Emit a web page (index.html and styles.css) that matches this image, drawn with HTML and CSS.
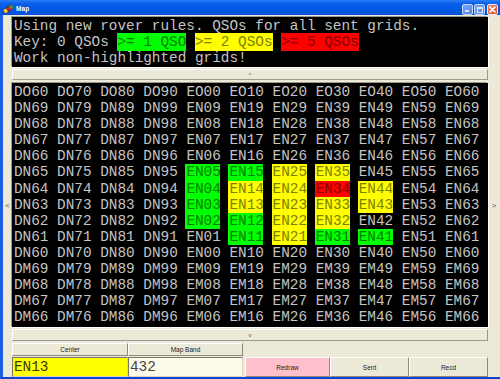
FILE: index.html
```html
<!DOCTYPE html>
<html>
<head>
<meta charset="utf-8">
<title>Map</title>
<link rel="stylesheet" href="styles.css">
</head>
<body>
<div class="window">
  <div class="titlebar">
    <svg class="appicon" width="11" height="11" viewBox="0 0 11 11">
      <rect x="0.5" y="4" width="10" height="4" rx="1" transform="rotate(-35 5.5 6)" fill="#c8281e" stroke="#5a1008" stroke-width="0.6"/>
      <rect x="0.5" y="4" width="3" height="4" transform="rotate(-35 5.5 6)" fill="#f2d13a"/>
      <rect x="7.5" y="4" width="3" height="4" transform="rotate(-35 5.5 6)" fill="#3aa23a"/>
    </svg>
    <span class="title">Map</span>
    <div class="tbtns">
      <div class="tbtn tmin"><span class="minbar"></span></div>
      <div class="tbtn tmax"><span class="maxbox"></span></div>
      <div class="tbtn tclose">
        <svg width="9" height="9" viewBox="0 0 9 9"><path d="M2 2 L7 7 M7 2 L2 7" stroke="#fff" stroke-width="1.6" stroke-linecap="round"/></svg>
      </div>
    </div>
  </div>
  <div class="body">
    <div class="side side-left">&lt;</div>
    <div class="main">
      <div class="panel msg">
        <div class="line">Using new rover rules. QSOs for all sent grids.</div>
        <div class="line">Key: 0 QSOs <span class="k g">&gt;= 1 QSO</span> <span class="k y">&gt;= 2 QSOs</span> <span class="k r">&gt;= 5 QSOs</span></div>
        <div class="line">Work non-highlighted grids!</div>
      </div>
      <div class="bar bar-up">^</div>
      <div class="panel gridpanel">
        <div class="grid">
          <span class="c">DO60</span><span class="c">DO70</span><span class="c">DO80</span><span class="c">DO90</span><span class="c">EO00</span><span class="c">EO10</span><span class="c">EO20</span><span class="c">EO30</span><span class="c">EO40</span><span class="c">EO50</span><span class="c">EO60</span>
          <span class="c">DN69</span><span class="c">DN79</span><span class="c">DN89</span><span class="c">DN99</span><span class="c">EN09</span><span class="c">EN19</span><span class="c">EN29</span><span class="c">EN39</span><span class="c">EN49</span><span class="c">EN59</span><span class="c">EN69</span>
          <span class="c">DN68</span><span class="c">DN78</span><span class="c">DN88</span><span class="c">DN98</span><span class="c">EN08</span><span class="c">EN18</span><span class="c">EN28</span><span class="c">EN38</span><span class="c">EN48</span><span class="c">EN58</span><span class="c">EN68</span>
          <span class="c">DN67</span><span class="c">DN77</span><span class="c">DN87</span><span class="c">DN97</span><span class="c">EN07</span><span class="c">EN17</span><span class="c">EN27</span><span class="c">EN37</span><span class="c">EN47</span><span class="c">EN57</span><span class="c">EN67</span>
          <span class="c">DN66</span><span class="c">DN76</span><span class="c">DN86</span><span class="c">DN96</span><span class="c">EN06</span><span class="c">EN16</span><span class="c">EN26</span><span class="c">EN36</span><span class="c">EN46</span><span class="c">EN56</span><span class="c">EN66</span>
          <span class="c">DN65</span><span class="c">DN75</span><span class="c">DN85</span><span class="c">DN95</span><span class="c g">EN05</span><span class="c g">EN15</span><span class="c y">EN25</span><span class="c y">EN35</span><span class="c">EN45</span><span class="c">EN55</span><span class="c">EN65</span>
          <span class="c">DN64</span><span class="c">DN74</span><span class="c">DN84</span><span class="c">DN94</span><span class="c g">EN04</span><span class="c y">EN14</span><span class="c y">EN24</span><span class="c r">EN34</span><span class="c y">EN44</span><span class="c">EN54</span><span class="c">EN64</span>
          <span class="c">DN63</span><span class="c">DN73</span><span class="c">DN83</span><span class="c">DN93</span><span class="c g">EN03</span><span class="c y">EN13</span><span class="c y">EN23</span><span class="c y">EN33</span><span class="c y">EN43</span><span class="c">EN53</span><span class="c">EN63</span>
          <span class="c">DN62</span><span class="c">DN72</span><span class="c">DN82</span><span class="c">DN92</span><span class="c g">EN02</span><span class="c g">EN12</span><span class="c y">EN22</span><span class="c y">EN32</span><span class="c">EN42</span><span class="c">EN52</span><span class="c">EN62</span>
          <span class="c">DN61</span><span class="c">DN71</span><span class="c">DN81</span><span class="c">DN91</span><span class="c">EN01</span><span class="c g">EN11</span><span class="c y">EN21</span><span class="c g">EN31</span><span class="c g">EN41</span><span class="c">EN51</span><span class="c">EN61</span>
          <span class="c">DN60</span><span class="c">DN70</span><span class="c">DN80</span><span class="c">DN90</span><span class="c">EN00</span><span class="c">EN10</span><span class="c">EN20</span><span class="c">EN30</span><span class="c">EN40</span><span class="c">EN50</span><span class="c">EN60</span>
          <span class="c">DM69</span><span class="c">DM79</span><span class="c">DM89</span><span class="c">DM99</span><span class="c">EM09</span><span class="c">EM19</span><span class="c">EM29</span><span class="c">EM39</span><span class="c">EM49</span><span class="c">EM59</span><span class="c">EM69</span>
          <span class="c">DM68</span><span class="c">DM78</span><span class="c">DM88</span><span class="c">DM98</span><span class="c">EM08</span><span class="c">EM18</span><span class="c">EM28</span><span class="c">EM38</span><span class="c">EM48</span><span class="c">EM58</span><span class="c">EM68</span>
          <span class="c">DM67</span><span class="c">DM77</span><span class="c">DM87</span><span class="c">DM97</span><span class="c">EM07</span><span class="c">EM17</span><span class="c">EM27</span><span class="c">EM37</span><span class="c">EM47</span><span class="c">EM57</span><span class="c">EM67</span>
          <span class="c">DM66</span><span class="c">DM76</span><span class="c">DM86</span><span class="c">DM96</span><span class="c">EM06</span><span class="c">EM16</span><span class="c">EM26</span><span class="c">EM36</span><span class="c">EM46</span><span class="c">EM56</span><span class="c">EM66</span>
        </div>
      </div>
      <div class="bar bar-down">v</div>
      <div class="labels">
        <div class="btn lbl w1">Center</div>
        <div class="btn lbl w2">Map Band</div>
      </div>
      <div class="controls">
        <div class="field f-center">EN13</div>
        <div class="field f-band">432</div>
        <div class="btn big redraw">Redraw</div>
        <div class="btn big sent">Sent</div>
        <div class="btn big recd">Recd</div>
      </div>
    </div>
    <div class="side side-right">&gt;</div>
  </div>
</div>
</body>
</html>
```
FILE: styles.css
```css
* { box-sizing: border-box; }
html, body { margin: 0; padding: 0; }
body {
  width: 500px;
  height: 379px;
  overflow: hidden;
  background: #ECE9D8;
  font-family: "Liberation Sans", Arial, sans-serif;
}
.window {
  width: 500px;
  height: 379px;
  display: flex;
  flex-direction: column;
  background: #ECE9D8;
}
.titlebar {
  height: 15px;
  flex: none;
  display: flex;
  align-items: center;
  background: linear-gradient(#2a7cf5 0%, #0a5fea 25%, #0058e6 60%, #0452d8 100%);
  padding-left: 3px;
  padding-right: 2px;
}
.appicon { flex: none; margin-top: 1px; }
.title {
  color: #fff;
  font-weight: bold;
  font-size: 6.6px;
  margin-left: 2px;
  margin-top: 2px;
  text-shadow: 1px 0 0 #0a3a9a;
}
.tbtns {
  margin-left: auto;
  display: flex;
  gap: 1px;
  margin-top: 4px;
}
.tbtn {
  width: 11px;
  height: 11px;
  border: 1px solid #e8eefc;
  border-radius: 2px;
  position: relative;
  display: flex;
  align-items: center;
  justify-content: center;
}
.tmin, .tmax {
  background: linear-gradient(135deg, #8cb4f8, #5a8ff0);
  opacity: 0.85;
}
.tclose {
  background: linear-gradient(135deg, #ee8a66, #d94a22);
  margin-left: 1px;
}
.minbar {
  position: absolute;
  left: 2px;
  bottom: 2px;
  width: 4px;
  height: 2px;
  background: #fff;
}
.maxbox {
  width: 6px;
  height: 6px;
  border: 1px solid #fff;
  border-top-width: 2px;
}
.body {
  flex: 1;
  display: flex;
  border-left: 3px solid #1d5ee6;
  border-bottom: 2px solid #0b46d0;
}
.side {
  display: flex;
  align-items: center;
  justify-content: center;
  font-size: 8px;
  color: #555;
  padding-top: 18px;
}
.side-left { width: 9px; }
.side-right { width: 12px; }
.main {
  width: 476px;
  display: flex;
  flex-direction: column;
  padding-top: 2px;
}
.panel {
  background: #000;
  box-shadow: -1px -1px 0 #9d9a8c, 1px 1px 0 #ffffff;
  font-family: "Liberation Mono", "Courier New", monospace;
  font-size: 14.37px;
  color: #c4c4c4;
}
.msg {
  height: 50px;
  padding: 1px 0 0 2px;
}
.line {
  height: 16px;
  line-height: 16px;
  white-space: pre;
}
.k { padding: 1px 0; }
.g { background: #00ff00; color: #008000; }
.y { background: #ffff00; color: #808000; }
.r { background: #ff0000; color: #800000; }
.bar {
  background: #ECE9D8;
  border: 1px solid;
  border-color: #ffffff #9d9a8c #9d9a8c #ffffff;
  display: flex;
  align-items: center;
  justify-content: center;
  font-size: 6px;
  color: #555;
}
.bar-up { height: 11px; margin-top: 2px; }
.gridpanel {
  height: 244px;
  margin-top: 3px;
  padding: 1px 0 0 2px;
}
.grid {
  display: grid;
  grid-template-columns: repeat(11, 43.1px);
  grid-auto-rows: 16.1px;
  line-height: 16.1px;
}
.c {
  justify-self: start;
  width: 35px;
  margin-left: -1px;
  padding-left: 1px;
  white-space: nowrap;
}
.bar-down { height: 12px; margin-top: 2px; }
.labels {
  display: flex;
  height: 13px;
  margin-top: 2px;
}
.btn {
  background: #ECE9D8;
  border: 1px solid;
  border-color: #ffffff #8e8b7e #8e8b7e #ffffff;
  display: flex;
  align-items: center;
  justify-content: center;
  font-family: "Liberation Sans", Arial, sans-serif;
  font-size: 6.5px;
  color: #222;
}
.lbl.w1 { width: 116px; }
.lbl.w2 { width: 115px; }
.controls {
  display: flex;
  height: 20px;
  margin-top: 1px;
}
.field {
  border: 1px solid;
  border-color: #7a7868 #d8d5c6 #d8d5c6 #7a7868;
  font-family: "Liberation Mono", "Courier New", monospace;
  font-size: 14.37px;
  line-height: 18px;
  padding-left: 1px;
  color: #333;
}
.f-center { width: 116px; background: #ffff00; color: #3a3a00; }
.f-band { width: 115px; background: #fdfaea; color: #444; }
.big { height: 20px; }
.redraw { width: 85px; margin-left: 2px; background: #ffc0cb; }
.sent { width: 79px; }
.recd { width: 79px; }
```
